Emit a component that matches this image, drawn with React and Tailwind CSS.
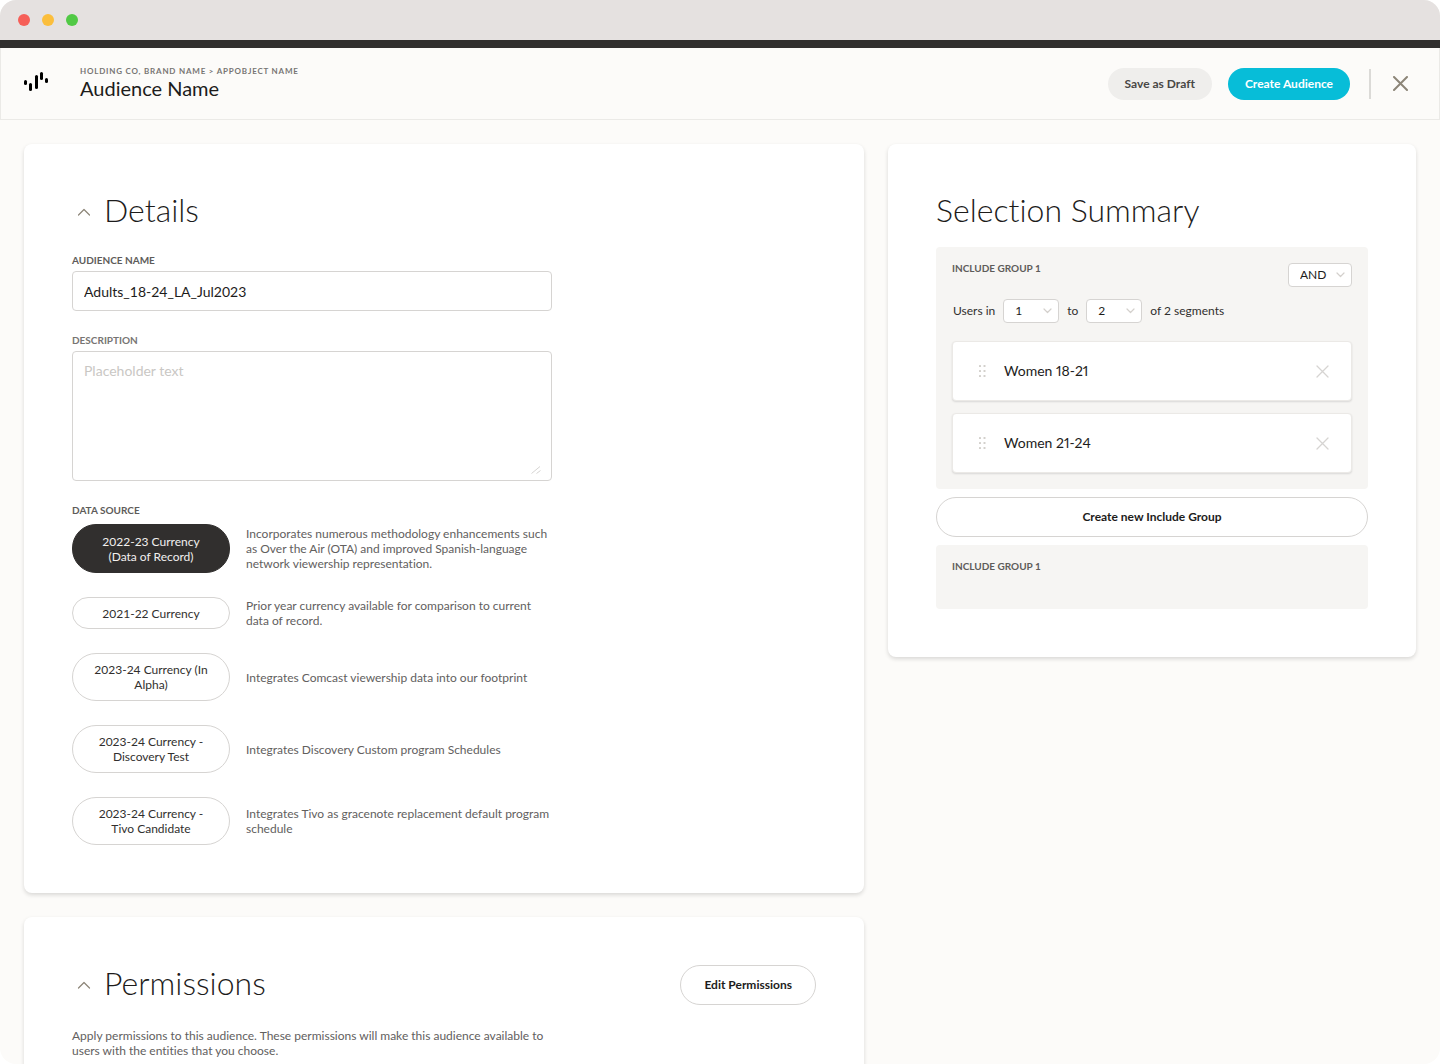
import React from "react";

const sources = [
  {
    name: "2022-23 Currency (Data of Record)",
    text: "Incorporates numerous methodology enhancements such as Over the Air (OTA) and improved Spanish-language network viewership representation.",
    active: true,
  },
  { name: "2021-22 Currency", text: "Prior year currency available for comparison to current data of record.", short: true },
  { name: "2023-24 Currency (In Alpha)", text: "Integrates Comcast viewership data into our footprint" },
  { name: "2023-24 Currency - Discovery Test", text: "Integrates Discovery Custom program Schedules" },
  { name: "2023-24 Currency - Tivo Candidate", text: "Integrates Tivo as gracenote replacement default program schedule" },
];

function Logo() {
  return (
    <svg width="24" height="20" viewBox="0 0 24 20" fill="#000" aria-hidden="true">
      <rect x="0" y="8" width="3" height="5" rx="1.5" />
      <rect x="5" y="11" width="3" height="8" rx="1.5" />
      <rect x="11" y="3" width="3" height="14" rx="1.5" />
      <rect x="16" y="0" width="3" height="8" rx="1.5" />
      <rect x="21" y="6" width="3" height="5" rx="1.5" />
    </svg>
  );
}

function CloseIcon({ size, width }) {
  return (
    <svg width={size} height={size} viewBox={`0 0 ${size} ${size}`} fill="none" stroke="currentColor" strokeWidth={width} strokeLinecap="round" aria-hidden="true">
      <path d={`M1 1 ${size - 1} ${size - 1}M${size - 1} 1 1 ${size - 1}`} />
    </svg>
  );
}

function Heading({ children }) {
  return (
    <div className="flex items-center">
      <button type="button" aria-label={`Collapse ${children}`} className="mt-1 flex h-6 w-6 items-center justify-center text-[#8c8578]">
        <svg width="14" height="8" viewBox="0 0 14 8" fill="none" stroke="currentColor" strokeWidth="1.2" strokeLinecap="round" strokeLinejoin="round" aria-hidden="true">
          <path d="M1.500 7 7 1.500 12.500 7" />
        </svg>
      </button>
      <h2 className="ml-2 text-[32px] leading-9 font-light">{children}</h2>
    </div>
  );
}

function Select({ label, options, value, className }) {
  return (
    <span className={`relative inline-flex ${className}`}>
      <select
        aria-label={label}
        defaultValue={value}
        className="h-6 w-full appearance-none rounded border border-[#d6d4d2] bg-white pr-5 pl-[11px] text-xs leading-4 text-[#1d1c1b]"
      >
        {options.map((o) => (
          <option key={o}>{o}</option>
        ))}
      </select>
      <svg className="pointer-events-none absolute top-[9px] right-[7px] text-[#d3d0cc]" width="9" height="6" viewBox="0 0 9 6" fill="none" stroke="currentColor" strokeWidth="1.2" strokeLinecap="round" strokeLinejoin="round" aria-hidden="true">
        <path d="M1 1 4.500 4.500 8 1" />
      </svg>
    </span>
  );
}

function Segment({ name }) {
  return (
    <li className="flex h-[60px] items-center rounded border border-[#ebe9e6] bg-white pr-[22px] pl-[26px] shadow-[0_1px_2px_rgba(0,0,0,0.12)]">
      <svg width="7" height="12" viewBox="0 0 7 12" fill="#d3d0cc" aria-hidden="true">
        {[0, 4.5].map((x) => [0, 5, 10].map((y) => <rect key={`${x}${y}`} x={x} y={y} width="2" height="2" rx="0.5" />))}
      </svg>
      <span className="ml-[18px] flex-1 text-sm proportional-nums text-[#1d1c1b]">{name}</span>
      <button type="button" aria-label={`Remove ${name}`} className="text-[#d6d4d2]">
        <CloseIcon size={13} width={1.3} />
      </button>
    </li>
  );
}

const card = "rounded-lg bg-white p-12 shadow-[0_2px_4px_rgba(0,0,0,0.14)]";
const label = "block text-[10px] leading-[18px] font-bold";
const outline = "h-10 rounded-full border border-[#d6d4d2] bg-white text-xs font-bold text-[#1d1c1b]";

function pillStyle({ active, short }) {
  if (active) return "min-h-[49px] border-[#312f2e] bg-[#312f2e] text-[#f2f0ee]";
  if (short) return "min-h-8 border-[#d6d4d2] bg-white text-[#312f2e]";
  return "min-h-12 border-[#d6d4d2] bg-white text-[#312f2e]";
}

export default function App() {
  return (
    <div className="flex h-screen flex-col overflow-hidden rounded-2xl bg-[#fcfbf9] font-[Lato,sans-serif] text-[#1d1c1b] [font-variant-ligatures:none]">
      <div className="flex h-10 shrink-0 items-center gap-3 bg-[#e5e1e0] px-[18px]">
        <span className="h-3 w-3 rounded-full bg-[#f65f58]" />
        <span className="h-3 w-3 rounded-full bg-[#fbbe3c]" />
        <span className="h-3 w-3 rounded-full bg-[#51c945]" />
      </div>
      <div className="h-2 shrink-0 bg-[#312f2e]" />
      <header className="flex h-[72px] shrink-0 items-center border-x border-b border-[#ebeae7] pr-[31px] pl-[23px]">
        <div className="flex flex-1 items-center gap-8 pb-1">
          <Logo />
          <div>
            <p className="text-[8px] leading-3 font-bold tracking-widest text-[#777573]">HOLDING CO, BRAND NAME &gt; APPOBJECT NAME</p>
            <h1 className="text-xl leading-[22px]">Audience Name</h1>
          </div>
        </div>
        <button type="button" className="h-8 rounded-full bg-[#efeeec] px-[17px] text-xs font-bold text-[#494745]">Save as Draft</button>
        <button type="button" className="ml-4 h-8 rounded-full bg-[#07bdd8] px-[17px] text-xs font-bold text-white">Create Audience</button>
        <span className="ml-[19px] h-[30px] w-0.5 bg-[#dbdad7]" />
        <button type="button" aria-label="Close" className="ml-[22px] text-[#8c8578]">
          <CloseIcon size={15} width={2} />
        </button>
      </header>

      <main className="grid min-h-0 flex-1 grid-cols-[minmax(0,35fr)_minmax(0,22fr)] items-start gap-6 overflow-y-auto p-6 [scrollbar-width:none]">
        <div className="flex flex-col gap-6">
          <section className={card}>
            <Heading>Details</Heading>
            <form className="mt-[23px] flex max-w-[480px] flex-col gap-5">
              <div>
                <label htmlFor="name" className={`${label} mb-0.5 text-[#5e5c5a]`}>AUDIENCE NAME</label>
                <input id="name" defaultValue="Adults_18-24_LA_Jul2023" className="h-10 w-full rounded border border-[#d6d4d2] bg-white px-[11px] text-sm" />
              </div>
              <div>
                <label htmlFor="description" className={`${label} mb-0.5 text-[#777573]`}>DESCRIPTION</label>
                <div className="relative flex">
                  <textarea id="description" placeholder="Placeholder text" className="h-[130px] w-full resize-none rounded border border-[#d6d4d2] bg-white px-[11px] py-[9px] text-sm placeholder:text-[#c9c7c4]" />
                  <svg className="pointer-events-none absolute right-[11px] bottom-[7px]" width="10" height="8" viewBox="0 0 10 8" fill="none" stroke="#d6d4d2" aria-hidden="true">
                    <path d="M.5 7.500 9 .5M5.500 7.500 9.500 4.500" />
                  </svg>
                </div>
              </div>
              <div role="group" aria-labelledby="source">
                <span id="source" className={`${label} mb-[5px] text-[#5e5c5a]`}>DATA SOURCE</span>
                <div className="flex flex-col gap-6">
                  {sources.map((s) => (
                    <div key={s.name} className="flex items-center gap-4">
                      <button
                        type="button"
                        aria-pressed={!!s.active}
                        className={`w-[158px] shrink-0 rounded-3xl border px-5 text-xs leading-[15px] ${pillStyle(s)}`}
                      >
                        {s.name}
                      </button>
                      <p className="text-xs leading-[15px] text-[#62605e]">{s.text}</p>
                    </div>
                  ))}
                </div>
              </div>
            </form>
          </section>

          <section className={card}>
            <div className="flex items-start justify-between">
              <Heading>Permissions</Heading>
              <button type="button" className={`${outline} px-[23px]`}>Edit Permissions</button>
            </div>
            <p className="mt-[23px] max-w-[480px] text-xs leading-[15px] text-[#62605e]">
              Apply permissions to this audience. These permissions will make this audience available to users with the entities that you choose.
            </p>
          </section>
        </div>

        <aside className={card}>
          <h2 className="text-[32px] leading-9 font-light">Selection Summary</h2>
          <div className="mt-[19px] flex flex-col gap-2">
            <section className="rounded bg-[#f6f5f3] p-4">
              <div className="flex items-start justify-between">
                <h3 className={`${label} -mt-1 text-[#5e5c5a]`}>INCLUDE GROUP 1</h3>
                <Select label="Group operator" value="AND" options={["AND", "OR"]} className="w-16" />
              </div>
              <div className="mt-3 flex items-center gap-2 pl-px text-xs text-[#312f2e]">
                <span>Users in</span>
                <Select label="Minimum segments" value="1" options={["1", "2"]} className="w-14" />
                <span>to</span>
                <Select label="Maximum segments" value="2" options={["1", "2"]} className="w-14" />
                <span>of 2 segments</span>
              </div>
              <ul className="mt-[18px] flex flex-col gap-3">
                <Segment name="Women 18-21" />
                <Segment name="Women 21-24" />
              </ul>
            </section>
            <button type="button" className={`${outline} w-full`}>Create new Include Group</button>
            <section className="min-h-16 rounded bg-[#f6f5f3] px-4 py-3">
              <h3 className={`${label} text-[#5e5c5a]`}>INCLUDE GROUP 1</h3>
            </section>
          </div>
        </aside>
      </main>
    </div>
  );
}
